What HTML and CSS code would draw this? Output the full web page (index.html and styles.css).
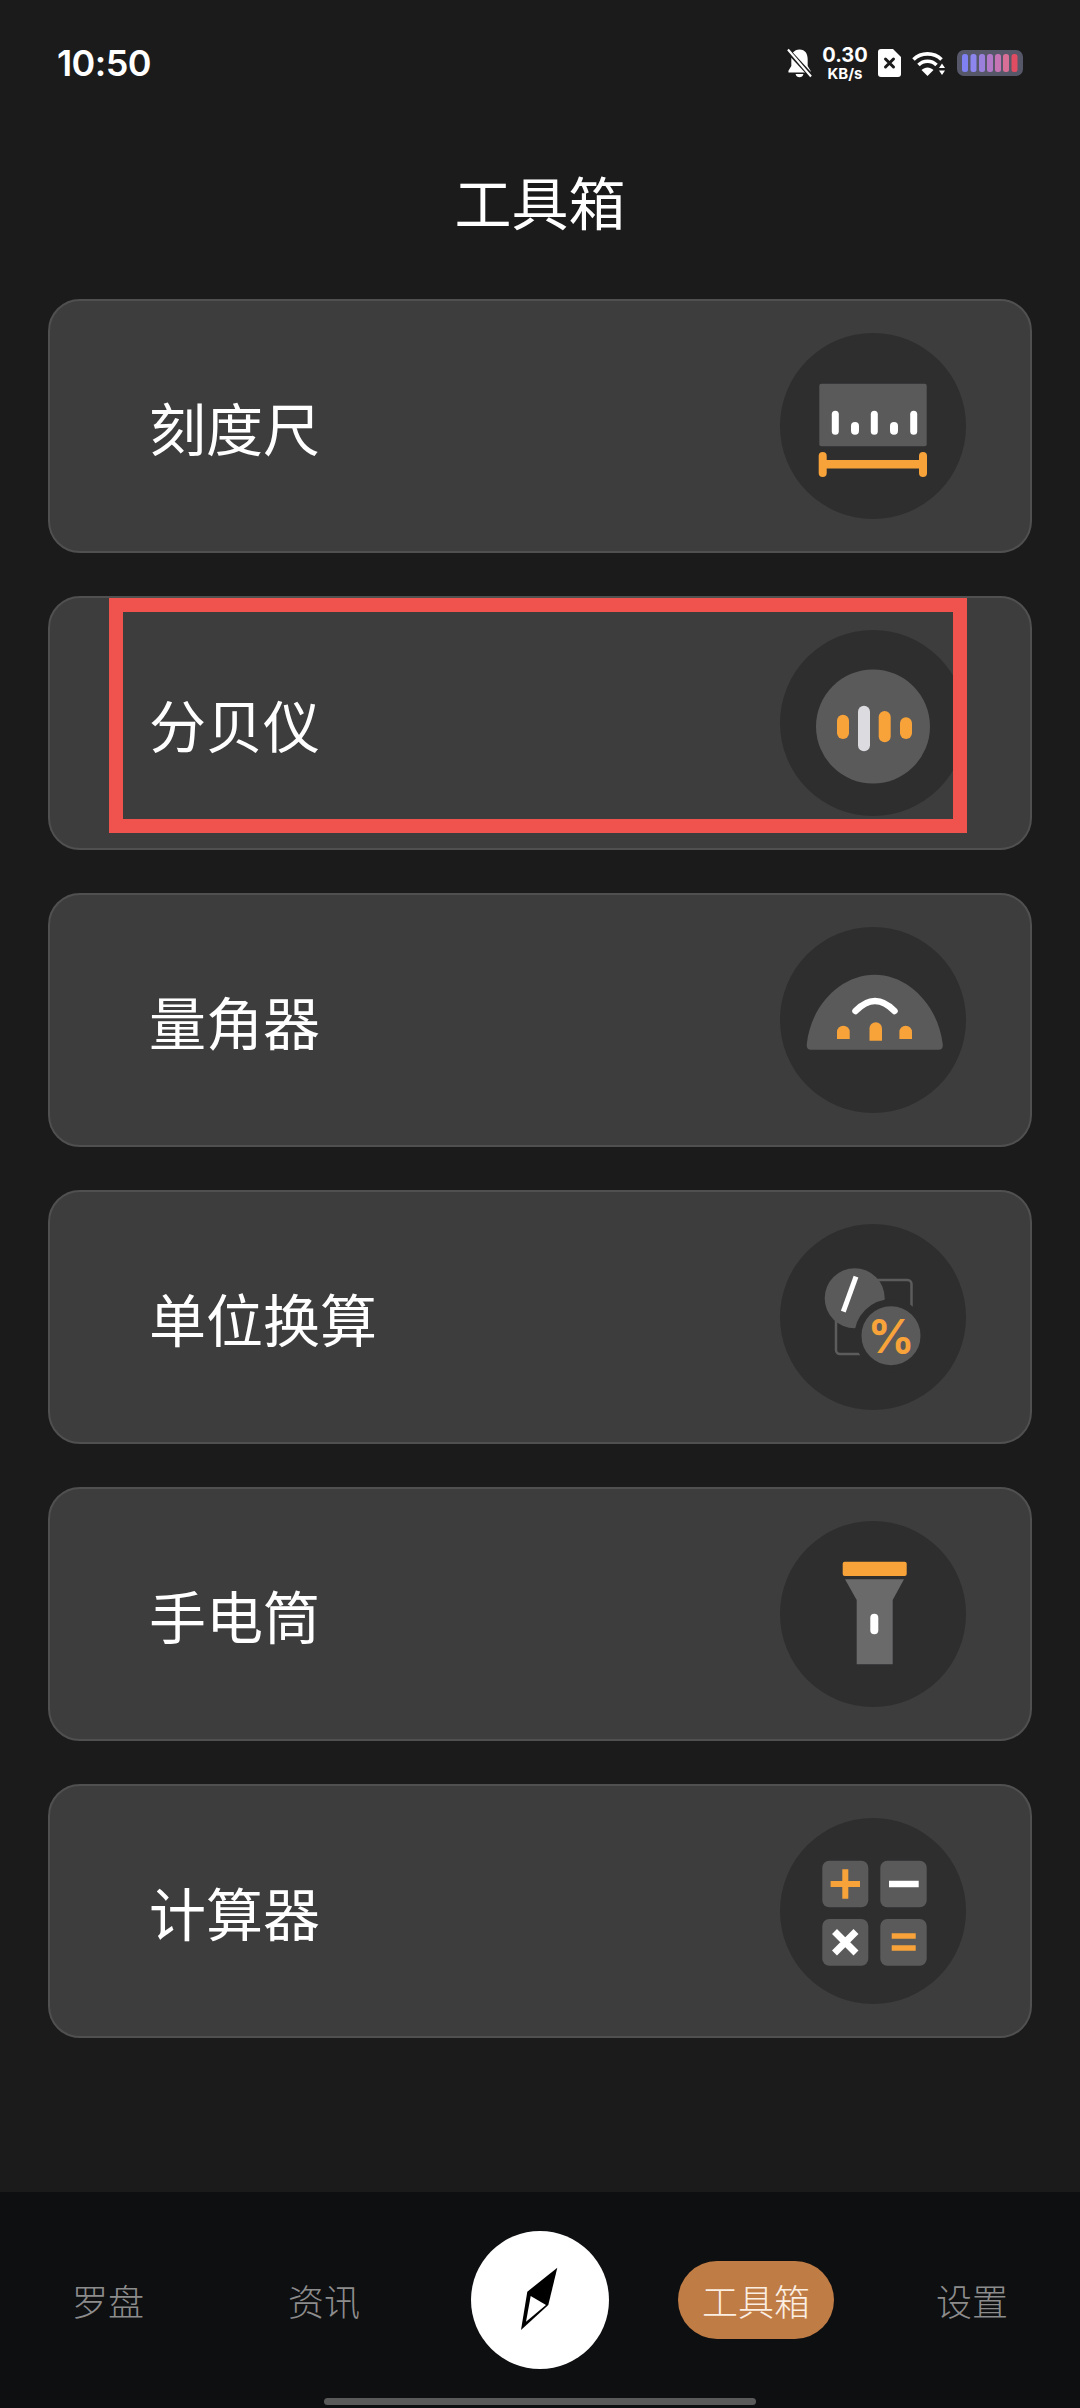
FILE: index.html
```html
<!DOCTYPE html>
<html lang="zh">
<head>
<meta charset="utf-8">
<title>工具箱</title>
<link rel="stylesheet" href="styles.css">
</head>
<body>
<div class="screen">
  <header class="status">
    <span class="time">10:50</span>
    <div class="status-right">
      <svg class="ic-bell" viewBox="0 0 26 30">
        <path fill="#fff" d="M13 1C7 1 4.500 5.500 4.500 11V18L1.500 23V25H24.500V23L21.500 18V11C21.500 5.500 19 1 13 1Z"/>
        <path fill="#fff" d="M9 26.500H17C16.500 31 9.500 31 9 26.500Z"/>
        <path stroke="#1b1b1b" stroke-width="5" d="M-1 0L24 27"/>
        <path stroke="#fff" stroke-width="2.200" d="M1 1L25 29"/>
      </svg>
      <div class="speed"><span class="speed-num">0.30</span><span class="speed-unit">KB/s</span></div>
      <svg class="ic-sim" viewBox="0 0 23 28">
        <path fill="#fff" d="M3 0H15L23 8V25A3 3 0 0 1 20 28H3A3 3 0 0 1 0 25V3A3 3 0 0 1 3 0Z"/>
        <path stroke="#1b1b1b" stroke-width="3" stroke-linecap="round" d="M7.500 10L15.500 18M15.500 10L7.500 18"/>
      </svg>
      <svg class="ic-wifi" viewBox="0 0 34 26">
        <g fill="none" stroke="#fff" stroke-width="3.600">
          <path d="M1.500 9.500C9 2 22 2 29.500 9.500"/>
          <path d="M6.500 15C11.500 10 19.500 10 24.500 15"/>
        </g>
        <path fill="#fff" d="M9.500 20C13 16.500 18 16.500 21.500 20L15.500 26Z"/>
        <path fill="#fff" d="M30 13.500L33 18H27ZM30 25L27 20.500H33Z"/>
      </svg>
      <svg class="ic-batt" viewBox="0 0 66 26">
        <rect width="66" height="26" rx="7" fill="#565869"/>
        <rect x="5" y="4" width="6" height="18" rx="2.500" fill="#7f80f2"/>
        <rect x="13.500" y="4" width="6" height="18" rx="2.500" fill="#8c86ee"/>
        <rect x="22" y="4" width="6" height="18" rx="2.500" fill="#9a80dc"/>
        <rect x="30" y="4" width="6" height="18" rx="2.500" fill="#b279c8"/>
        <rect x="38" y="4" width="6" height="18" rx="2.500" fill="#c774b4"/>
        <rect x="46" y="4" width="6" height="18" rx="2.500" fill="#d86f96"/>
        <rect x="54.500" y="4" width="6" height="18" rx="2.500" fill="#e04c62"/>
      </svg>
    </div>
  </header>

  <h1 class="title">工具箱</h1>

  <main class="list">
    <section class="card">
      <span class="label">刻度尺</span>
      <svg class="tool" viewBox="0 0 186 186">
        <circle class="disc" cx="93" cy="93" r="93"/>
        <rect class="gray" x="39.300" y="50.700" width="107.400" height="62.600" rx="2"/>
        <g class="white">
          <rect x="51.800" y="77.700" width="7" height="24" rx="3.500"/>
          <rect x="71" y="89" width="8" height="12.700" rx="4"/>
          <rect x="90.800" y="77.700" width="7" height="24" rx="3.500"/>
          <rect x="110" y="89" width="8" height="12.700" rx="4"/>
          <rect x="130.200" y="77.700" width="7" height="24" rx="3.500"/>
        </g>
        <g class="orange">
          <rect x="42" y="127" width="102" height="8.500"/>
          <rect x="38.700" y="119" width="8" height="25" rx="4"/>
          <rect x="139" y="119" width="8" height="25" rx="4"/>
        </g>
      </svg>
    </section>

    <section class="card">
      <span class="label">分贝仪</span>
      <svg class="tool" viewBox="0 0 186 186">
        <circle class="disc" cx="93" cy="93" r="93"/>
        <circle class="gray" cx="93" cy="96.500" r="57"/>
        <g class="orange">
          <rect x="57" y="84.700" width="12" height="24.300" rx="6"/>
          <rect x="98.700" y="81" width="12" height="31.300" rx="6"/>
          <rect x="120" y="87.300" width="12" height="21.700" rx="6"/>
        </g>
        <rect x="78" y="75.700" width="12" height="45.600" rx="6" fill="#dcdce0"/>
      </svg>
      <div class="highlight"></div>
    </section>

    <section class="card">
      <span class="label">量角器</span>
      <svg class="tool" viewBox="0 0 186 186">
        <circle class="disc" cx="93" cy="93" r="93"/>
        <path class="gray" d="M31 122.700H158.500Q163.500 122.700 162.700 117C158 78 128 47.700 94.700 47.700C61 47.700 31 78 26.800 117Q26.200 122.700 31 122.700Z"/>
        <path d="M75.500 84Q95 64 114.500 84" fill="none" stroke="#fff" stroke-width="6.500" stroke-linecap="round"/>
        <g class="orange">
          <path d="M57 112V105A6.300 6.300 0 0 1 69.700 105V112Z"/>
          <path d="M89.500 113.700V101.500A6.200 6.200 0 0 1 102 101.500V113.700Z"/>
          <path d="M119.400 112V105A6.300 6.300 0 0 1 132 105V112Z"/>
        </g>
      </svg>
    </section>

    <section class="card">
      <span class="label">单位换算</span>
      <svg class="tool" viewBox="0 0 186 186">
        <circle class="disc" cx="93" cy="93" r="93"/>
        <rect x="56" y="56" width="75.500" height="74" rx="4" fill="none" stroke="#5c5c5c" stroke-width="2.500"/>
        <circle class="gray" cx="74.700" cy="74.300" r="30"/>
        <path d="M76 52.700L63.300 87.700" stroke="#fff" stroke-width="5"/>
        <circle class="gray" cx="111" cy="111.700" r="33" stroke="#2e2e2f" stroke-width="7"/>
        <text class="pct" x="111" y="129" text-anchor="middle">%</text>
      </svg>
    </section>

    <section class="card">
      <span class="label">手电筒</span>
      <svg class="tool" viewBox="0 0 186 186">
        <circle class="disc" cx="93" cy="93" r="93"/>
        <rect class="orange" x="62.700" y="40.700" width="64" height="14.300" rx="2"/>
        <path d="M65 58.300H124L112.700 79V143.300H76.700V79Z" fill="#6a6a6b"/>
        <rect class="white" x="90.300" y="92.700" width="8" height="20.600" rx="4"/>
      </svg>
    </section>

    <section class="card">
      <span class="label">计算器</span>
      <svg class="tool" viewBox="0 0 186 186">
        <circle class="disc" cx="93" cy="93" r="93"/>
        <g class="gray">
          <rect x="42.300" y="42.700" width="46" height="46.600" rx="7"/>
          <rect x="100.300" y="42.700" width="46.400" height="46.600" rx="7"/>
          <rect x="42.300" y="101" width="46" height="46.700" rx="7"/>
          <rect x="100.300" y="101" width="46.400" height="46.700" rx="7"/>
        </g>
        <path d="M50.600 66H80M65.300 51.300V80.700" stroke="#f8a33a" stroke-width="6"/>
        <path d="M109 66H138.700" stroke="#fff" stroke-width="6.500"/>
        <path d="M54.500 113.500L76 135M76 113.500L54.500 135" stroke="#fff" stroke-width="7"/>
        <path d="M111.700 118H135.700M111.700 130H135.700" stroke="#f8a33a" stroke-width="5.500"/>
      </svg>
    </section>
  </main>

  <nav class="nav">
    <span class="nav-item">罗盘</span>
    <span class="nav-item">资讯</span>
    <div class="nav-center">
      <svg class="compass" viewBox="0 0 138 138">
        <circle cx="69" cy="69" r="69" fill="#fff"/>
        <path d="M86.300 36.700L56.300 60.700L50 99L77.300 74Z" fill="#000"/>
        <path d="M59.700 65L75 74L55 90.700Z" fill="#fff"/>
      </svg>
    </div>
    <span class="nav-item nav-active"><span class="pill">工具箱</span></span>
    <span class="nav-item">设置</span>
    <div class="home-bar"></div>
  </nav>
</div>
</body>
</html>
```
FILE: styles.css
```css
* { box-sizing: border-box; }

html, body {
  margin: 0;
  padding: 0;
  background: #1b1b1b;
}

.screen {
  width: 1080px;
  height: 2408px;
  display: flex;
  flex-direction: column;
  background: #1b1b1b;
  color: #fff;
  font-family: "Noto Sans CJK SC", "Noto Sans", sans-serif;
  overflow: hidden;
}

.status {
  height: 126px;
  flex: none;
  display: flex;
  align-items: center;
  justify-content: space-between;
  padding: 0 57px;
}

.time {
  font-family: Inter, Roboto, sans-serif;
  font-size: 36px;
  font-weight: 600;
  letter-spacing: -0.6px;
}

.status-right {
  display: flex;
  align-items: center;
  gap: 11px;
}

.ic-bell { width: 25px; height: 30px; overflow: visible; }
.ic-sim { width: 23px; height: 28px; }
.ic-wifi { width: 34px; height: 26px; }
.ic-batt { width: 66px; height: 26px; }

.speed {
  width: 44px;
  display: flex;
  flex-direction: column;
  align-items: center;
  font-family: Inter, Roboto, sans-serif;
  font-weight: 700;
}
.speed-num { font-size: 20px; line-height: 21px; }
.speed-unit { font-size: 15px; line-height: 15px; }

.title {
  flex: none;
  height: 173px;
  margin: 0;
  padding-bottom: 25px;
  display: flex;
  align-items: center;
  justify-content: center;
  font-size: 57px;
  font-weight: 400;
}

.list {
  display: flex;
  flex-direction: column;
  gap: 43px;
  padding: 0 48px;
}

.card {
  position: relative;
  height: 254px;
  display: flex;
  align-items: center;
  justify-content: space-between;
  padding: 0 64px 0 99px;
  background: #3d3d3d;
  border: 2px solid #505050;
  border-radius: 32px;
}

.label {
  font-size: 57px;
  font-weight: 400;
  color: #fff;
}

.tool { width: 186px; height: 186px; flex: none; }

.disc { fill: #2e2e2f; }
.gray { fill: #5a5a5b; }
.white { fill: #fff; }
.orange { fill: #f8a33a; }
.pct {
  font-family: Inter, Roboto, sans-serif;
  font-size: 46px;
  font-weight: 700;
  fill: #f8a33a;
}

.highlight {
  position: absolute;
  left: 59px;
  top: 0;
  width: 858px;
  height: 235px;
  border: 14px solid #f0524d;
}

.nav {
  position: relative;
  margin-top: auto;
  height: 216px;
  flex: none;
  display: grid;
  grid-template-columns: repeat(5, 1fr);
  align-items: center;
  justify-items: center;
  background: #0e0f11;
}

.nav-item {
  font-size: 36px;
  font-weight: 300;
  color: #8c8c8c;
}

.nav-active { color: #fff; }

.pill {
  display: flex;
  align-items: center;
  justify-content: center;
  width: 156px;
  height: 78px;
  border-radius: 39px;
  background: #c07c45;
  color: #fbeee2;
}

.nav-center { display: flex; }
.compass { width: 138px; height: 138px; }

.home-bar {
  position: absolute;
  left: 324px;
  bottom: 3px;
  width: 432px;
  height: 7px;
  border-radius: 4px;
  background: #5a5a5a;
}
```
